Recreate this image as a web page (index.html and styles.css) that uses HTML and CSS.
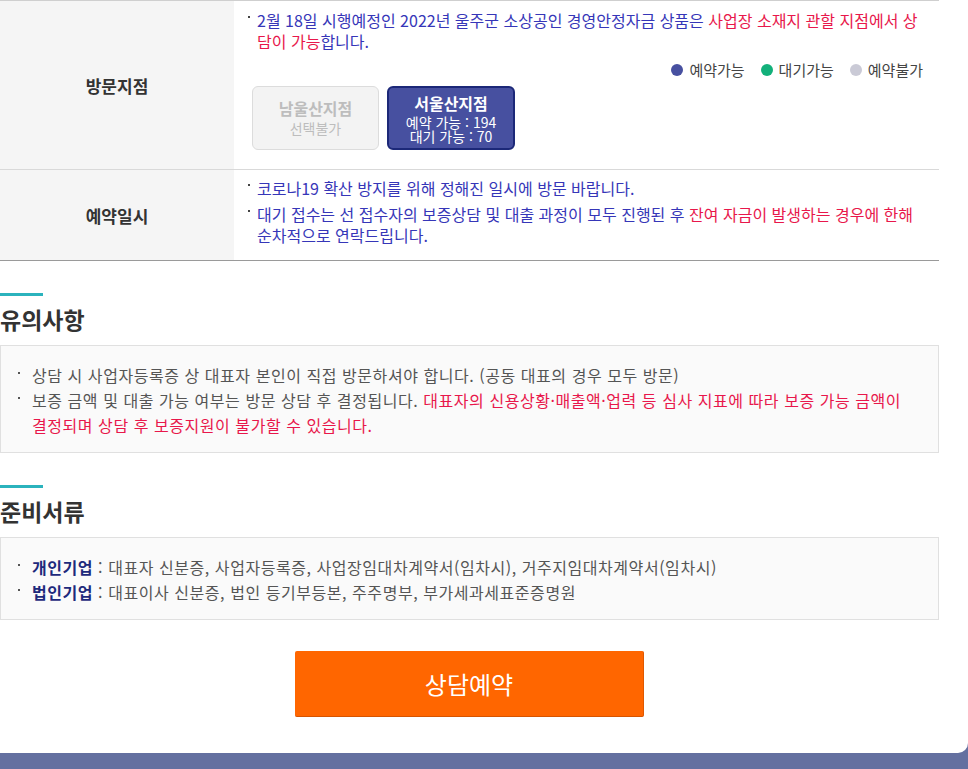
FILE: index.html
```html
<!DOCTYPE html>
<html lang="ko">
<head>
<meta charset="utf-8">
<title>상담예약</title>
<link rel="stylesheet" href="styles.css">
</head>
<body>
<div class="card">
  <table class="info">
    <tr class="row-branch">
      <th>방문지점</th>
      <td>
        <ul class="notes">
          <li><span>2월 18일 시행예정인 2022년 울주군 소상공인 경영안정자금 상품은 <em>사업장 소재지 관할 지점에서 상담이 가능</em>합니다.</span></li>
        </ul>
        <div class="legend">
          <span class="lg"><i class="dot dot-ok"></i>예약가능</span>
          <span class="lg"><i class="dot dot-wait"></i>대기가능</span>
          <span class="lg"><i class="dot dot-no"></i>예약불가</span>
        </div>
        <div class="branches">
          <button class="branch branch-off" type="button">
            <span class="b-title">남울산지점</span>
            <span class="b-sub">선택불가</span>
          </button>
          <button class="branch branch-on" type="button">
            <span class="b-title">서울산지점</span>
            <span class="b-small">예약 가능 : 194</span>
            <span class="b-small">대기 가능 : 70</span>
          </button>
        </div>
      </td>
    </tr>
    <tr class="row-date">
      <th>예약일시</th>
      <td>
        <ul class="notes">
          <li><span>코로나19 확산 방지를 위해 정해진 일시에 방문 바랍니다.</span></li>
          <li><span>대기 접수는 선 접수자의 보증상담 및 대출 과정이 모두 진행된 후 <em>잔여 자금이 발생하는 경우에 한해</em> 순차적으로 연락드립니다.</span></li>
        </ul>
      </td>
    </tr>
  </table>

  <section class="sec">
    <h2 class="sec-title">유의사항</h2>
    <ul class="box">
      <li><span>상담 시 사업자등록증 상 대표자 본인이 직접 방문하셔야 합니다. (공동 대표의 경우 모두 방문)</span></li>
      <li><span>보증 금액 및 대출 가능 여부는 방문 상담 후 결정됩니다. <em>대표자의 신용상황·매출액·업력 등 심사 지표에 따라 보증 가능 금액이 결정되며 상담 후 보증지원이 불가할 수 있습니다.</em></span></li>
    </ul>
  </section>

  <section class="sec">
    <h2 class="sec-title">준비서류</h2>
    <ul class="box">
      <li><span><strong>개인기업</strong> : 대표자 신분증, 사업자등록증, 사업장임대차계약서(임차시), 거주지임대차계약서(임차시)</span></li>
      <li><span><strong>법인기업</strong> : 대표이사 신분증, 법인 등기부등본, 주주명부, 부가세과세표준증명원</span></li>
    </ul>
  </section>

  <div class="actions">
    <button class="btn-reserve" type="button">상담예약</button>
  </div>
</div>
</body>
</html>
```

FILE: styles.css
```css
html, body {
  margin: 0;
  padding: 0;
  background: #6470a0;
  min-height: 100%;
}
body {
  font-family: "Noto Sans CJK KR", "Malgun Gothic", "Noto Sans", sans-serif;
  color: #333;
}
.card {
  width: 939px;
  padding: 0 29px 36px 0;
  background: #fff;
  border-bottom-right-radius: 10px;
}
.info {
  width: 939px;
  border-collapse: collapse;
  border-top: 1px solid #cfcfcf;
  border-bottom: 1px solid #9a9a9a;
}
.info th {
  width: 234px;
  background: #f5f5f5;
  font-size: 17px;
  font-weight: bold;
  color: #333;
  text-align: center;
  vertical-align: middle;
  padding: 0;
}
.info td {
  vertical-align: top;
  padding: 9px 12px 18px 14px;
}
.row-branch {
  height: 169px;
}
.row-date {
  border-top: 1px solid #d9d9d9;
}
.row-date td {
  padding: 8px 12px 14px 14px;
}
.notes {
  list-style: none;
  margin: 0;
  padding: 0;
  display: flex;
  flex-direction: column;
  gap: 5px;
  word-break: normal;
}
.notes li {
  display: flex;
  font-size: 16px;
  line-height: 21px;
  color: #3636b8;
}
.notes li::before {
  content: "";
  flex: none;
  width: 2px;
  height: 2px;
  background: #444;
  margin: 6px 7px 0 0;
}
em {
  font-style: normal;
  color: #e8174b;
}
.legend {
  display: flex;
  justify-content: flex-end;
  gap: 16px;
  margin: 8px 4px 0 0;
  font-size: 15px;
  line-height: 20px;
  color: #444;
}
.lg {
  display: flex;
  align-items: center;
}
.dot {
  width: 12px;
  height: 12px;
  border-radius: 50%;
  margin-right: 6px;
}
.dot-ok { background: #4750a0; }
.dot-wait { background: #12b07a; }
.dot-no { background: #cacad6; }
.branches {
  display: flex;
  gap: 8px;
  margin: 6px 0 0 4px;
}
.branch {
  width: 127px;
  height: 64px;
  border-radius: 6px;
  display: flex;
  flex-direction: column;
  align-items: center;
  justify-content: center;
  padding: 0;
  font-family: inherit;
}
.branch-off {
  background: #f3f3f3;
  border: 1px solid #dcdcdc;
  color: #bdbdbd;
}
.branch-off .b-title {
  font-size: 16px;
  font-weight: bold;
  line-height: 18px;
}
.branch-off .b-sub {
  font-size: 14px;
  line-height: 18px;
  margin-top: 2px;
}
.branch-on {
  width: 128px;
  background: #4750a0;
  border: 2px solid #1c2878;
  color: #fff;
}
.branch-on .b-title {
  font-size: 16px;
  font-weight: bold;
  line-height: 18px;
  margin-bottom: 3px;
}
.branch-on .b-small {
  font-size: 14px;
  line-height: 14px;
}
.sec {
  margin-top: 32px;
}
.sec-title {
  margin: 0;
  font-size: 23px;
  font-weight: bold;
  line-height: 30px;
  color: #333;
}
.sec-title::before {
  content: "";
  display: block;
  width: 43px;
  height: 3px;
  background: #2bb3bd;
  margin-bottom: 8px;
}
.box {
  list-style: none;
  margin: 11px 0 0;
  padding: 17px 17px 14px 17px;
  width: calc(939px - 36px);
  background: #fafafa;
  border: 1px solid #e0e0e0;
  word-break: keep-all;
}
.box li {
  display: flex;
  font-size: 16px;
  letter-spacing: 0.55px;
  line-height: 25px;
  color: #555;
}
.box li::before {
  content: "";
  flex: none;
  width: 2px;
  height: 2px;
  background: #555;
  margin: 9px 12px 0 0;
}
.box strong {
  color: #1e2a7c;
}
.actions {
  display: flex;
  justify-content: center;
  margin-top: 31px;
}
.btn-reserve {
  width: 349px;
  height: 66px;
  background: #ff6600;
  border: none;
  border-right: 1px solid #e05800;
  border-bottom: 1px solid #d65400;
  border-radius: 2px;
  color: #fff;
  font-family: inherit;
  font-size: 24px;
}
```
